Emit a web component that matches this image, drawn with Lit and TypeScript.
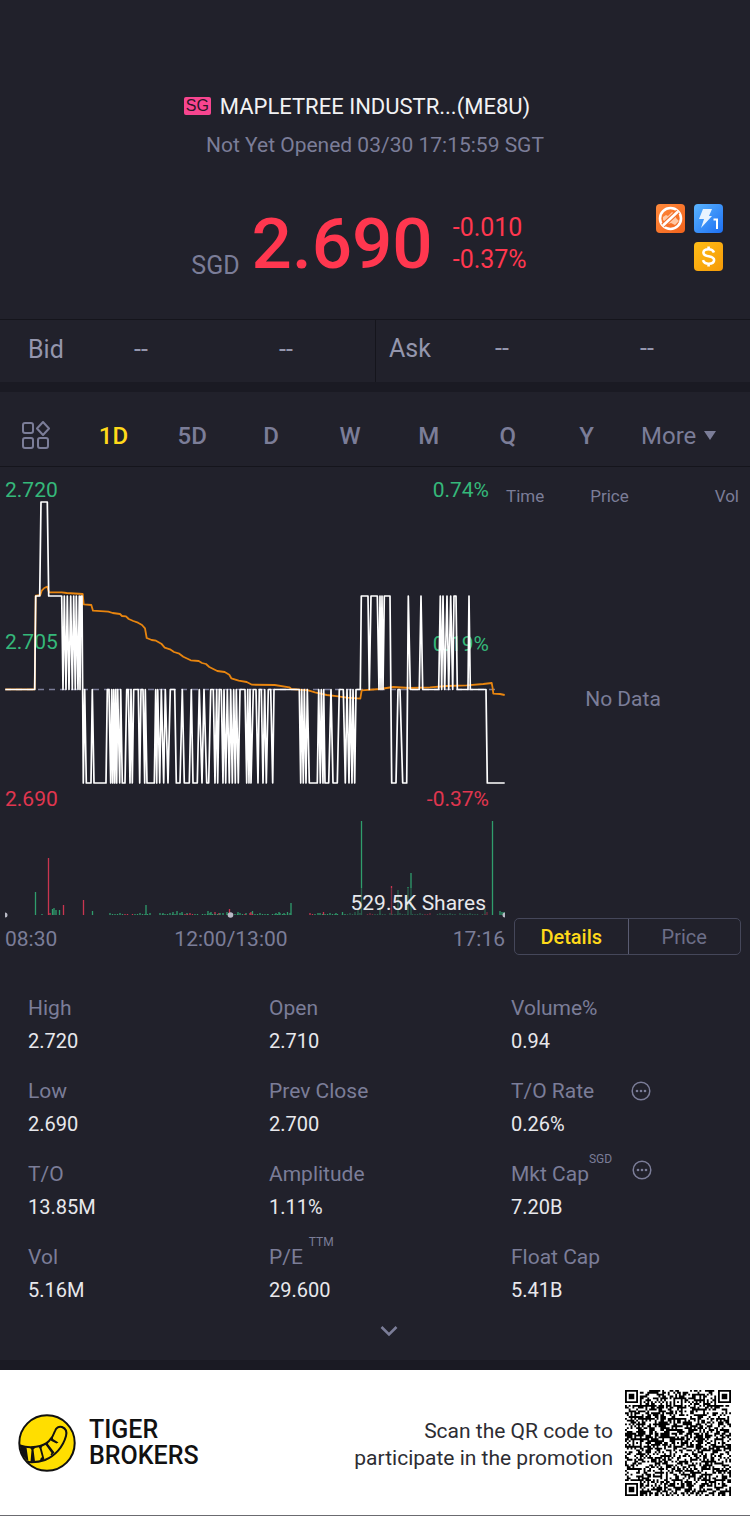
import { LitElement, html, svg, css } from "lit";
import { customElement, state } from "lit/decorators.js";
import { classMap } from "lit/directives/class-map.js";

// Price levels of the intraday chart, as y coordinates in the plot.
const LEVELS: Record<string, number> = { H: 35, U: 129, M: 222.5, L: 316 };

// Level runs of the session: a level letter, then first and last tick (three ticks per unit of width).
const RUNS = `M16-104 U107-119 H123-142 U146-185 M189 U193 M198 U202 M207 U212 M217 U221 M226 U229 M234 U238 M240 U243-246
L250 M254 L259-273 M277 L282-318 M322-327 L332 M335 L338 M341 L344 M347 L350 M353 L359 M362 L367-375 M380-385 L390 M393
L397 M401-415 L419 M423-429 L434 M436 L441-463 M467 L470 M473 L479 M484 L491 M496 L504 M511-524 L529-540 M547 L553-568
M574 L579-592 M598 L606 M612 L620-626 M632-640 L645 M650 L653 M658-664 L669 M672 L677 M682 L688 M692 L697 M701 L706 M709
L715 M720-735 L740 M743 L747 M750 L753 M760-768 L774 M778-784 L789 M794 L799 M805-812 L818 M822-898 L902 M905 L910 M913
L918 M922 L928-952 M956 L961 M964 L969 M971 L975-986 M993 L999-1012 M1018-1030 L1036 M1041 L1047 M1051 L1056 M1059 L1064
M1068-1081 U1084-1104 M1108 U1113-1132 M1137 U1140 M1143 U1146 M1149 U1153-1170 L1175-1188 M1194-1200 L1208-1220 U1225
M1231-1258 U1263 M1268-1316 U1321 M1325 U1329 M1334 U1341 M1346 U1352 M1358 U1362-1368 M1372-1404 U1407 M1411-1458 L1462-1514`;

const pricePath = "M" + RUNS.trim().split(/\s+/).flatMap((run) => {
  const y = LEVELS[run[0]];
  return run.slice(1).split("-").map((t) => `${(Number(t) / 3).toFixed(1)} ${y}`);
}).join("L");

const averagePoints: number[][] = [
  [16, 643], [104, 643], [107, 362], [121, 360], [125, 347], [133, 339], [142, 335], [147, 352], [185, 352], [200, 354],
  [248, 357], [251, 388], [274, 390], [279, 407], [325, 410], [338, 414], [360, 417], [366, 423], [378, 424], [386, 432],
  [400, 438], [414, 443], [426, 450], [435, 460], [440, 489], [455, 495], [468, 497], [484, 506], [494, 518], [510, 523],
  [522, 531], [538, 536], [550, 545], [572, 556], [596, 558], [606, 564], [618, 567], [628, 576], [652, 588], [674, 591],
  [688, 599], [694, 610], [716, 617], [740, 621], [756, 629], [824, 630], [868, 637], [874, 642], [925, 646], [945, 652],
  [980, 660], [1015, 664], [1040, 668], [1081, 671], [1085, 646], [1140, 642], [1180, 636], [1230, 639], [1290, 637],
  [1340, 633], [1400, 631], [1450, 627], [1475, 624], [1478, 640], [1480, 656], [1500, 657], [1514, 660],
];
const averagePath = "M" + averagePoints.map(([x, y]) => `${(x / 3).toFixed(1)} ${(8 + y / 3).toFixed(1)}`).join("L");

// Volume bars: x, height, rising.
const volumes: [number, number, boolean][] = [
  [35.5, 23, true], [42, 1, true], [48.5, 57, false], [50, 2, false], [52.5, 6, true], [54, 7, true], [56, 5, true],
  [59.5, 5, true], [63.5, 10, false], [83.5, 15, false], [92.5, 4, true], [146, 10, true], [163, 2, true], [173, 3, true],
  [177, 4, true], [182, 3, true], [187, 2, true], [208, 4, true], [211, 3, true], [215, 3, false], [219, 2, false],
  [223, 2, true], [227, 3, true], [229.5, 6, false], [238, 3, true], [246, 2, true], [251, 3, false], [252.5, 4, true],
  [268, 1, true], [276, 2, true], [279, 3, true], [284, 2, true], [287.5, 3, true], [291, 12, true], [323.5, 3, false],
  [318, 2, true], [336, 2, true], [342.5, 3, true], [355, 3, true], [358, 5, true], [361.5, 94, true], [380, 9, true],
  [391.5, 29, false], [398, 25, true], [408, 28, true], [411, 42, true], [485, 6, true], [487, 3, false],
  [492.5, 94, true], [500, 4, true], [502, 3, true], [504, 3, true],
];
// Small trades along the floor of the chart.
for (let x = 110; x < 487; x += 2.5) {
  const n = Math.round(x * 2.5);
  if (n % 7 !== 3 && !(x > 154 && x < 158) && !(x > 296 && x < 310)) volumes.push([x, 1 + ((n * 13) % 5 === 0 ? 1 : 0), n % 6 !== 1]);
}

// QR symbol of 57 modules: finders, timing and alignment marks, and a data field.
const QR = 57;
const qrPath = (() => {
  let seed = 77031;
  let d = "";
  const square = (r: number, c: number, cr: number, cc: number, half: number) => {
    const k = Math.max(Math.abs(r - cr), Math.abs(c - cc));
    return k <= half ? k : -1;
  };
  for (let r = 0; r < QR; r++) {
    for (let c = 0; c < QR; c++) {
      seed = (seed * 1103515245 + 12345) % 2147483648;
      let on = (seed >> 16) % 100 < 52;
      if (r === 6 || c === 6) on = (r + c) % 2 === 0;
      for (const ar of [6, 28, 50]) for (const ac of [6, 28, 50]) {
        const k = square(r, c, ar, ac, 2);
        if (k >= 0) on = k !== 1;
      }
      for (const [fr, fc] of [[3, 3], [3, QR - 4], [QR - 4, 3]]) {
        const k = square(r, c, fr, fc, 4);
        if (k >= 0) on = k !== 2 && k !== 4;
      }
      if (on) d += `M${c} ${r}h1v1h-1z`;
    }
  }
  return d;
})();

interface Stat { label: string; value: string; note?: string; info?: boolean; }
const stats: Stat[] = [
  { label: "High", value: "2.720" }, { label: "Open", value: "2.710" }, { label: "Volume%", value: "0.94" },
  { label: "Low", value: "2.690" }, { label: "Prev Close", value: "2.700" }, { label: "T/O Rate", value: "0.26%", info: true },
  { label: "T/O", value: "13.85M" }, { label: "Amplitude", value: "1.11%" }, { label: "Mkt Cap", value: "7.20B", note: "SGD", info: true },
  { label: "Vol", value: "5.16M" }, { label: "P/E", value: "29.600", note: "TTM" }, { label: "Float Cap", value: "5.41B" },
];

@customElement("quote-header")
class QuoteHeader extends LitElement {
  static styles = css`
    :host { display: block; padding-top: 92px; }
    .title { display: flex; justify-content: center; align-items: center; gap: 9px; margin: 0; padding-right: 36px; color: #f2f2f4; font-size: 22px; line-height: 30px; font-weight: 400; }
    .market { background: #f7458f; color: #2a1626; border-radius: 2px; width: 27px; margin-bottom: 2px; font: 16px/18px "Liberation Sans", sans-serif; text-align: center; }
    .status { margin: 8px 0 0; text-align: center; color: #7b7d98; font-size: 21px; line-height: 30px; }
    .quote { display: grid; grid-template-columns: 1fr auto 1fr; padding-right: 27px; margin-top: 40px; height: 119px; }
    .price { grid-column: 2; display: flex; align-items: flex-end; color: #ff374f; height: 88px; padding-right: 5px; }
    .currency { color: #7b7d98; font-size: 25px; line-height: 44px; margin-right: 12px; }
    .last { font-size: 71px; line-height: 88px; font-weight: 500; margin-right: 20px; }
    .change { align-self: center; font-size: 25px; line-height: 32px; }
    .badges { display: grid; grid-template-columns: 29px 29px; gap: 9px; justify-content: end; align-content: start; padding-top: 4px; }
    .badges svg { display: block; }
    .badges svg:last-child { grid-column: 2; }
    .book { display: grid; grid-template-columns: 1fr 1fr; border-top: 1px solid #15151c; height: 62px; color: #9496ad; font-size: 25px; line-height: 30px; }
    .side { display: grid; grid-template-columns: 106fr 145fr 96fr; padding: 15px 0 15px 28px; }
    .side.ask { grid-template-columns: 106fr 145fr 110fr; padding: 14px 0 16px 13px; border-left: 1px solid #15151c; }
  `;
  render() {
    return html`
      <h1 class="title"><span class="market">SG</span><span>MAPLETREE INDUSTR...(ME8U)</span></h1>
      <p class="status">Not Yet Opened 03/30 17:15:59 SGT</p>
      <div class="quote">
        <div class="price">
          <span class="currency">SGD</span><span class="last">2.690</span>
          <div class="change"><div>-0.010</div><div>-0.37%</div></div>
        </div>
        <div class="badges">
          <svg width="29" height="29" viewBox="0 0 29 29" role="img" aria-label="No short selling">
            <defs><linearGradient id="o" x2="1" y2="1"><stop stop-color="#ff8a3c"/><stop offset="1" stop-color="#f2631c"/></linearGradient></defs>
            <rect width="29" height="29" rx="4" fill="url(#o)"/>
            <path d="M7 13l3-2 2 1 4-4 3 2 1 4 3 3-4 4-4-2-3 1-5-4z" fill="#ffc8a4"/>
            <circle cx="14.5" cy="14.5" r="10.500" fill="none" stroke="#fff" stroke-width="2.600"/>
            <path d="M7 21.500L22 7.500" stroke="#f2702c" stroke-width="5"/><path d="M7 21.500L22 7.500" stroke="#fff" stroke-width="2.600"/>
          </svg>
          <svg width="29" height="29" viewBox="0 0 29 29" role="img" aria-label="Level 1 quotes">
            <defs><linearGradient id="b" x2="1" y2="1"><stop stop-color="#5ab4ff"/><stop offset="1" stop-color="#1d6ff2"/></linearGradient></defs>
            <rect width="29" height="29" rx="4" fill="url(#b)"/>
            <path d="M9 5h9l-3 7h3L7 24l3-9H5z" fill="#e8f3ff"/>
            <path d="M19.500 15.500h3.500V25" fill="none" stroke="#fff" stroke-width="2"/>
          </svg>
          <svg width="29" height="29" viewBox="0 0 29 29" role="img" aria-label="Financing">
            <defs><linearGradient id="y" x2="1" y2="1"><stop stop-color="#ffbd17"/><stop offset="1" stop-color="#f59a08"/></linearGradient></defs>
            <rect width="29" height="29" rx="4" fill="url(#y)"/>
            <path d="M20 10.500C19 8 17 7.200 14.600 7.200c-3 0-5.200 1.300-5.200 3.500 0 5 10.700 2.300 10.700 7.400 0 2.300-2.300 3.700-5.400 3.700-2.700 0-4.900-1.100-5.700-3.600M14.600 4.500v3M14.600 21.500v3" fill="none" stroke="#fff" stroke-width="2.600"/>
          </svg>
        </div>
      </div>
      <div class="book">
        <div class="side"><span>Bid</span><span>--</span><span>--</span></div>
        <div class="side ask"><span>Ask</span><span>--</span><span>--</span></div>
      </div>
    `;
  }
}

@customElement("period-tabs")
class PeriodTabs extends LitElement {
  @state() private active = "1D";
  static styles = css`
    :host { display: block; border-top: 10px solid #1a1a23; border-bottom: 1px solid #15151c; }
    .tabs { display: grid; grid-template-columns: 74px repeat(7, 1fr) 124px; align-items: center; height: 74px; padding-top: 14px; box-sizing: border-box; }
    button { background: none; border: 0; padding: 0; font: 500 24px/30px Roboto, sans-serif; color: #7b7d98; cursor: pointer; }
    .on { color: #ffd91a; }
    .grid { padding-left: 22px; padding-bottom: 3px; display: flex; }
    .more { display: flex; align-items: center; gap: 8px; padding-left: 15px; font-weight: 400; }
  `;
  render() {
    return html`<nav class="tabs">
      <button class="grid" aria-label="Indicators">
        <svg width="28" height="28" viewBox="0 0 28 28" fill="none" stroke="#7b7d98" stroke-width="2">
          <rect x="1" y="2" width="10" height="10" rx="2"/><path d="M21 1l6 6.500-6 6.500-6-6.500z" stroke-linejoin="round"/>
          <rect x="1" y="17" width="10" height="10" rx="2"/><rect x="16" y="17" width="10" height="10" rx="2"/>
        </svg>
      </button>
      ${["1D", "5D", "D", "W", "M", "Q", "Y"].map((p) => html`
        <button class=${classMap({ on: p === this.active })} @click=${() => (this.active = p)}>${p}</button>`)}
      <button class="more">More<svg width="12" height="10" viewBox="0 0 12 10"><path d="M0 0h12L6 9z" fill="#7b7d98"/></svg></button>
    </nav>`;
  }
}

@customElement("intraday-panel")
class IntradayPanel extends LitElement {
  @state() private pane = "Details";
  static styles = css`
    :host { display: grid; grid-template-columns: 510fr 240fr; }
    .chart { display: block; width: 100%; height: auto; font-family: Roboto, sans-serif; font-size: 21px; }
    .up { fill: #35b87a; }
    .down { fill: #e0364f; }
    .axis { fill: #7b7d98; }
    .shares { fill: #e8e8ec; }
    .end { text-anchor: end; }
    .mid { text-anchor: middle; }
    .side { display: flex; flex-direction: column; padding: 17px 9px 10px 5px; color: #7b7d98; }
    .head { display: flex; justify-content: space-between; font-size: 17px; line-height: 24px; padding-right: 2px; margin-left: -9px; }
    .head span:nth-child(2) { padding-right: 40px; }
    .empty { flex: 1; display: flex; align-items: center; justify-content: center; font-size: 21px; padding-bottom: 29px; padding-right: 10px; }
    .seg { display: grid; grid-template-columns: 1fr 1fr; border: 1px solid #45475a; border-radius: 5px; height: 35px; margin-left: -1px; }
    .seg button { background: none; border: 0; padding: 0; font: 20px/34px Roboto, sans-serif; color: #6d6f88; cursor: pointer; }
    .seg button + button { border-left: 1px solid #5a5c72; }
    .seg .on { color: #ffd91a; font-weight: 500; }
  `;
  render() {
    return html`
      <svg class="chart" viewBox="0 0 510 498" role="img" aria-label="Intraday price and volume">
        <text class="up" x="5" y="30">2.720</text>
        <text class="up" x="5" y="182">2.705</text>
        <text class="down" x="5" y="339">2.690</text>
        <text class="up end" x="489" y="30">0.74%</text>
        <text class="up end" x="489" y="184">0.19%</text>
        <text class="down end" x="489" y="339">-0.37%</text>
        <path d="M5 222.500H500" stroke="#7b7d98" stroke-width="1.500" stroke-dasharray="6 5"/>
        <path d=${averagePath} fill="none" stroke="#e8850f" stroke-width="1.800" stroke-linejoin="round"/>
        <path d=${pricePath} fill="none" stroke="#fff" stroke-width="1.700" stroke-linejoin="round"/>
        ${volumes.map(([x, h, up]) => svg`<path d="M${x} 448v${-h}" stroke=${up ? "#2f9d6c" : "#c93550"} stroke-width="1.300"/>`)}
        <path d="M5 445.500a2.500 2.500 0 0 1 0 5zM505 445.500a2.500 2.500 0 0 0 0 5z" fill="#b9bac6"/>
        <circle cx="230.500" cy="448" r="2.800" fill="#b9bac6"/>
        <rect x="346" y="421" width="143" height="27" fill="#21212b" opacity=".5"/>
        <text class="shares end" x="486" y="443">529.5K Shares</text>
        <text class="axis" x="5" y="479">08:30</text>
        <text class="axis mid" x="231" y="479">12:00/13:00</text>
        <text class="axis end" x="505" y="479">17:16</text>
      </svg>
      <div class="side">
        <div class="head"><span>Time</span><span>Price</span><span>Vol</span></div>
        <div class="empty">No Data</div>
        <div class="seg">
          ${["Details", "Price"].map((p) => html`
            <button class=${classMap({ on: p === this.pane })} @click=${() => (this.pane = p)}>${p}</button>`)}
        </div>
      </div>
    `;
  }
}

@customElement("stat-list")
class StatList extends LitElement {
  static styles = css`
    :host { display: block; padding-top: 27px; border-bottom: 10px solid #1a1a23; }
    .stats { display: grid; grid-template-columns: 241fr 242fr 239fr; row-gap: 17px; margin: 0; padding-left: 28px; }
    dt, dd { margin: 0; line-height: 33px; }
    dt { display: flex; color: #7b7d98; font-size: 21px; }
    dd { color: #e8e8ec; font-size: 20px; }
    .note { font-size: 12px; line-height: 16px; margin-top: -7px; }
    .note.spaced { margin-left: 6px; }
    .info { margin: 6px 0 0 37px; width: 20px; height: 20px; padding: 0; border: 0; background: none; }
    .note + .info { margin: 2px 0 0 20px; }
    .info svg, .fold svg { display: block; }
    .fold { display: block; margin: 0 auto; padding: 18px 0 23px 27px; border: 0; background: none; }
  `;
  render() {
    return html`
      <dl class="stats">
        ${stats.map((s) => html`<div>
          <dt>${s.label}
            ${s.note ? html`<span class=${classMap({ note: true, spaced: s.note === "TTM" })}>${s.note}</span>` : null}
            ${s.info ? html`<button class="info" aria-label="About ${s.label}">
              <svg width="20" height="20" viewBox="0 0 20 20"><circle cx="10" cy="10" r="8.800" fill="none" stroke="#7b7d98" stroke-width="1.500"/>
              <g fill="#7b7d98"><circle cx="6" cy="10" r="1.300"/><circle cx="10" cy="10" r="1.300"/><circle cx="14" cy="10" r="1.300"/></g></svg></button>` : null}
          </dt>
          <dd>${s.value}</dd>
        </div>`)}
      </dl>
      <button class="fold" aria-label="Show more">
        <svg width="18" height="12" viewBox="0 0 18 12"><path d="M1.500 2L9 9.500 16.500 2" fill="none" stroke="#7b7d98" stroke-width="2.600"/></svg>
      </button>
    `;
  }
}

@customElement("promo-footer")
class PromoFooter extends LitElement {
  static styles = css`
    :host { display: flex; align-items: center; justify-content: space-between; background: #fff; height: 145px; padding: 0 19px 0 18px; border-bottom: 1px solid #6b6b70; }
    .brand { display: flex; align-items: center; gap: 13px; color: #111; font: 500 25px/26px Roboto, sans-serif; }
    .scan { display: flex; align-items: center; gap: 12px; color: #2d2d33; font-size: 21px; line-height: 27px; text-align: right; }
    .scan div { padding-top: 4px; }
    svg { display: block; }
  `;
  render() {
    return html`
      <div class="brand">
        <svg width="58" height="58" viewBox="0 0 58 58" aria-hidden="true">
          <circle cx="29" cy="29" r="27.700" fill="#ffde00" stroke="#111" stroke-width="2"/>
          <path d="M2 31.500C12 35 25 33 31 27C35 23 36 20 37 17C38 13.500 41 12 44 13C48 14.500 49 18 48 22C45 33 37 42 27 46C21 48 16 48.500 10 48" fill="none" stroke="#111" stroke-width="2" stroke-linecap="round"/>
          <path d="M2 31.500L8.500 33.500L10.500 47.500C5 43.500 2.500 38 2 31.500zM12 33.500L18 33L15.500 35.500L17 47.500L12.500 48L13.500 36zM20.500 32.500L25 31L23.500 34L26.500 45.500L22 47L22.500 44.500L24 43L21.800 35zM26.500 30L30.500 27.500L30 30L36.500 38.500L33.500 41.500L32.500 40.500L33.500 39L28.500 32zM32 25.500L35 22.500L35 25L40.500 28.500L38.500 29.500L33.500 27z" fill="#111"/>
        </svg>
        <div>TIGER<br>BROKERS</div>
      </div>
      <div class="scan">
        <div>Scan the QR code to<br>participate in the promotion</div>
        <svg width="106" height="106" viewBox="0 0 57 57" role="img" aria-label="QR code"><path d=${qrPath} fill="#000"/></svg>
      </div>
    `;
  }
}

@customElement("app-root")
class AppRoot extends LitElement {
  static styles = css`
    :host { display: block; background: #21212b; font-family: Roboto, sans-serif; }
  `;
  render() {
    return html`
      <quote-header></quote-header>
      <period-tabs></period-tabs>
      <intraday-panel></intraday-panel>
      <stat-list></stat-list>
      <promo-footer></promo-footer>
    `;
  }
}
